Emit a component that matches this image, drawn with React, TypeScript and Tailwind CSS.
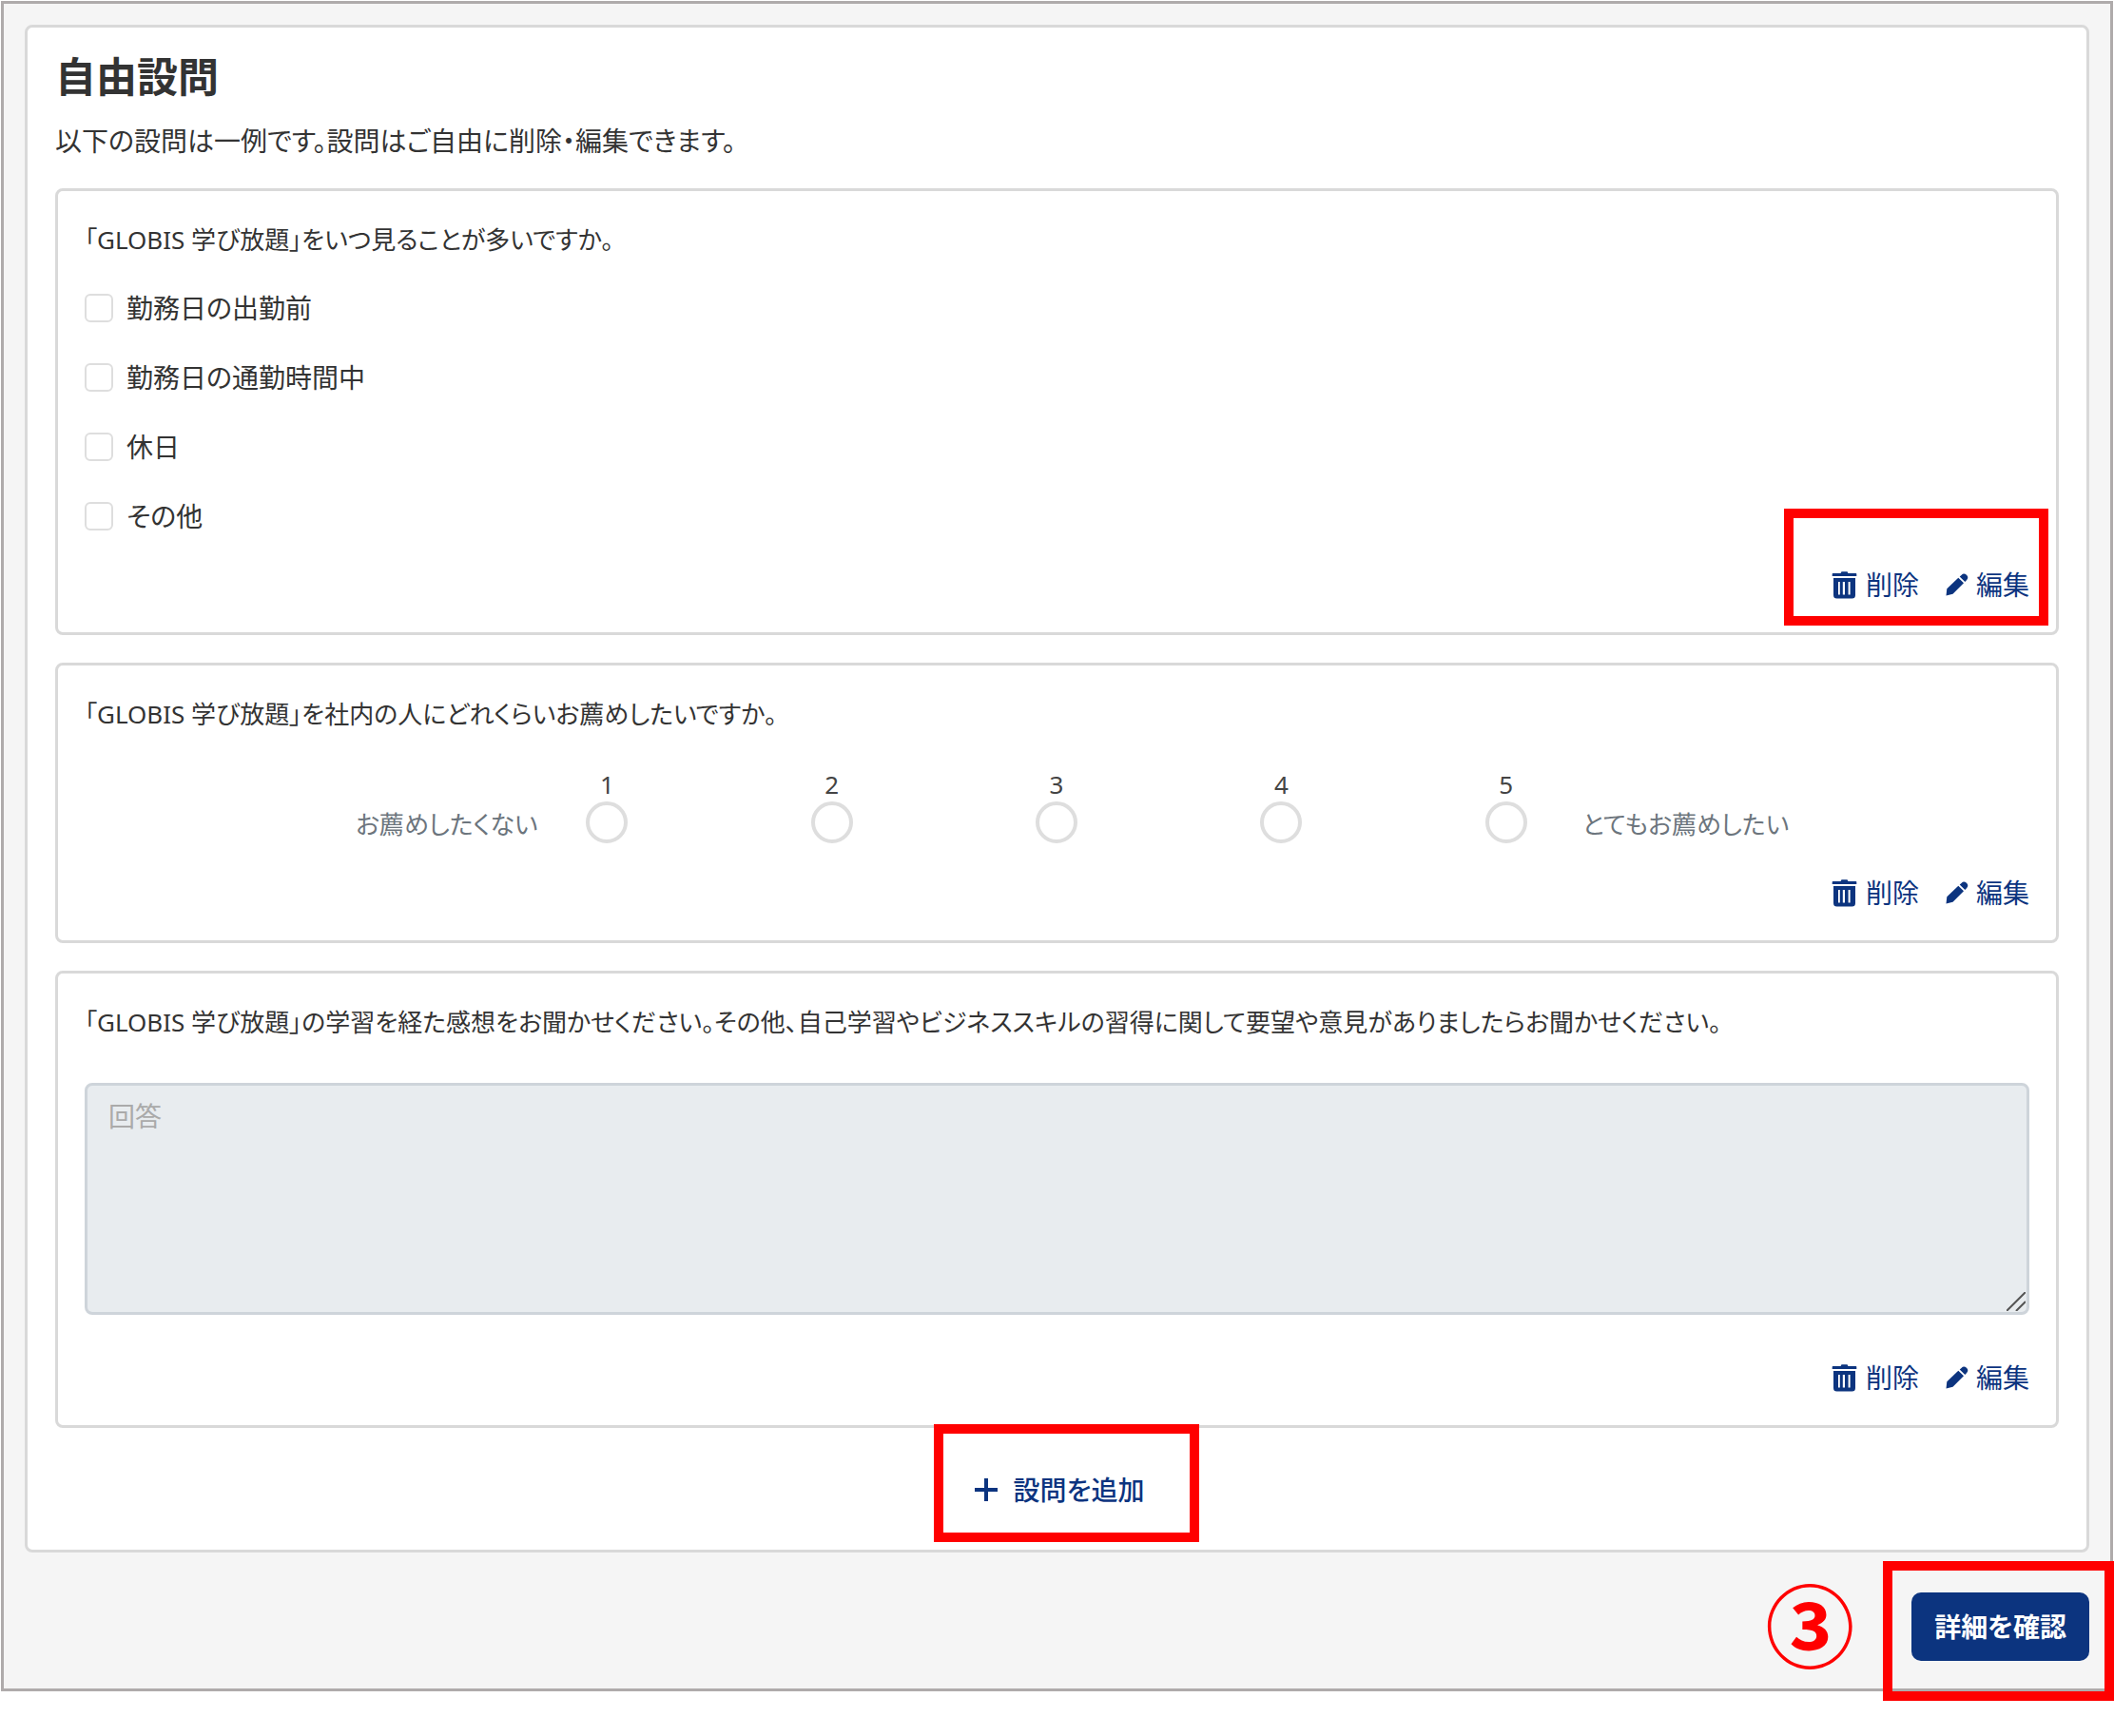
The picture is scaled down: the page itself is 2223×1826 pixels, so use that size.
import type { ReactNode } from "react";

function TrashIcon() {
  return (
    <svg width="28" height="30" viewBox="0 0 28 30" aria-hidden="true">
      <path
        fill="currentColor"
        fillRule="evenodd"
        d="M1.500 3H9.500L10.500 1.200h6L17.500 3h8a.8.8 0 0 1 .8.8V6H.7V3.800a.8.8 0 0 1 .8-.8zM2 8h23v18a3.500 3.500 0 0 1-3.500 3.500h-16A3.500 3.500 0 0 1 2 26zM7 12v13.500h1.800V12zm4.800 0v13.500h2.200V12zm5.800 0v13.500h2V12z"
      />
    </svg>
  );
}

function PencilIcon() {
  return (
    <svg width="24" height="24" viewBox="0 0 24 24" aria-hidden="true">
      <path
        fill="currentColor"
        d="M.5 23.500l.8-7.200L13.300 4.800l5.700 5.400L7.500 21.800zM14.700 3.500l1.800-1.600a3.800 3.800 0 0 1 5.500 5.300l-1.700 1.700z"
      />
    </svg>
  );
}

function PlusIcon() {
  return (
    <svg width="26" height="26" viewBox="0 0 26 26" aria-hidden="true">
      <path fill="none" stroke="currentColor" strokeWidth="4" d="M13 1v24M1 13h24" />
    </svg>
  );
}

function Actions({ highlighted = false }: { highlighted?: boolean }) {
  return (
    <div className="flex justify-end">
      <div className="relative flex gap-7 text-[#0c347f]">
        <button type="button" className="flex items-center gap-2">
          <TrashIcon />
          削除
        </button>
        <button type="button" className="flex items-center gap-2">
          <PencilIcon />
          編集
        </button>
        {highlighted && (
          <span className="pointer-events-none absolute -top-[60px] -right-5 -bottom-[23px] -left-[50px] border-[10px] border-[#ff0000]" />
        )}
      </div>
    </div>
  );
}

function Question({ title, children, highlighted }: { title: string; children: ReactNode; highlighted?: boolean }) {
  return (
    <fieldset className="rounded-lg border-3 border-[#d9d9d9] px-7 pt-[31px] pb-[30px]">
      <legend className="float-left mb-8 w-full text-[26px] leading-10">{title}</legend>
      <div className="clear-both">{children}</div>
      <Actions highlighted={highlighted} />
    </fieldset>
  );
}

const times = ["勤務日の出勤前", "勤務日の通勤時間中", "休日", "その他"];
const scores = [1, 2, 3, 4, 5];

export default function App() {
  return (
    <main className="p-px pb-[46px] font-['Noto_Sans','Noto_Sans_CJK_JP',sans-serif] text-[28px] leading-10 text-[#333] [font-feature-settings:'palt']">
      <div className="border-3 border-[#afabab] bg-[#f5f5f5] px-[22px] pt-[22px] pb-[21px]">
        <section className="rounded-lg border-3 border-[#d9d9d9] bg-white px-[29px] pt-[22px] pb-[43px]">
          <h1 className="text-[43px] leading-[60px] font-bold">自由設問</h1>
          <p className="mt-[17px] mb-[30px]">以下の設問は一例です。設問はご自由に削除・編集できます。</p>
          <div className="flex flex-col gap-[29px]">
            <Question title="「GLOBIS 学び放題」をいつ見ることが多いですか。" highlighted>
              <div className="mb-8 flex flex-col gap-[33px]">
                {times.map((t) => (
                  <label key={t} className="flex items-center gap-[14px]">
                    <input
                      type="checkbox"
                      className="size-[30px] appearance-none rounded-md border-2 border-[#dedede] bg-white checked:bg-[#0c347f]"
                    />
                    {t}
                  </label>
                ))}
              </div>
            </Question>

            <Question title="「GLOBIS 学び放題」を社内の人にどれくらいお薦めしたいですか。">
              <div className="mb-8 flex items-end pt-1 text-[26px] text-[#6c757d]">
                <span className="w-[23.300%] text-right">お薦めしたくない</span>
                <div className="flex flex-1 justify-between pr-[58px] pl-[51px]">
                  {scores.map((n) => (
                    <label key={n} className="flex flex-col items-center leading-9 text-[#444]">
                      {n}
                      <input
                        type="radio"
                        name="recommend"
                        className="size-11 appearance-none rounded-full border-4 border-[#dedede] bg-white checked:bg-[#0c347f]"
                      />
                    </label>
                  ))}
                </div>
                <span className="w-[23%]">とてもお薦めしたい</span>
              </div>
            </Question>

            <Question title="「GLOBIS 学び放題」の学習を経た感想をお聞かせください。その他、自己学習やビジネススキルの習得に関して要望や意見がありましたらお聞かせください。">
              <div className="pt-3 pb-[46px]">
                <div className="relative">
                  <textarea
                    aria-label="回答"
                    placeholder="回答"
                    className="block h-[244px] w-full resize-none rounded-lg border-3 border-[#ced4da] bg-[#e8ecef] px-[22px] py-3 placeholder:text-[#aaa]"
                  />
                  <svg className="pointer-events-none absolute right-1 bottom-1" width="20" height="20" viewBox="0 0 20 20" aria-hidden="true">
                    <path fill="none" stroke="#555" strokeWidth="2" d="M0 20L20 0M10 20l10-10" />
                  </svg>
                </div>
              </div>
            </Question>
          </div>
          <div className="mt-[45px] flex justify-center pl-1">
            <button type="button" className="relative flex items-center gap-4 font-medium text-[#0c347f]">
              <PlusIcon />
              設問を追加
              <span className="pointer-events-none absolute -top-[49px] -right-[58px] -bottom-[35px] -left-[42px] border-[10px] border-[#ff0000]" />
            </button>
          </div>
        </section>
        <div className="mt-[34px] flex items-center justify-end gap-[60px]">
          <span className="text-[94px] leading-[88px] font-bold text-[#ff0000]">③</span>
          <button type="button" className="relative rounded-[10px] bg-[#0c347f] px-6 py-4 font-bold text-white">
            詳細を確認
            <span className="pointer-events-none absolute -top-[33px] -right-[26px] -bottom-[42px] -left-[30px] border-[10px] border-[#ff0000]" />
          </button>
        </div>
      </div>
    </main>
  );
}
